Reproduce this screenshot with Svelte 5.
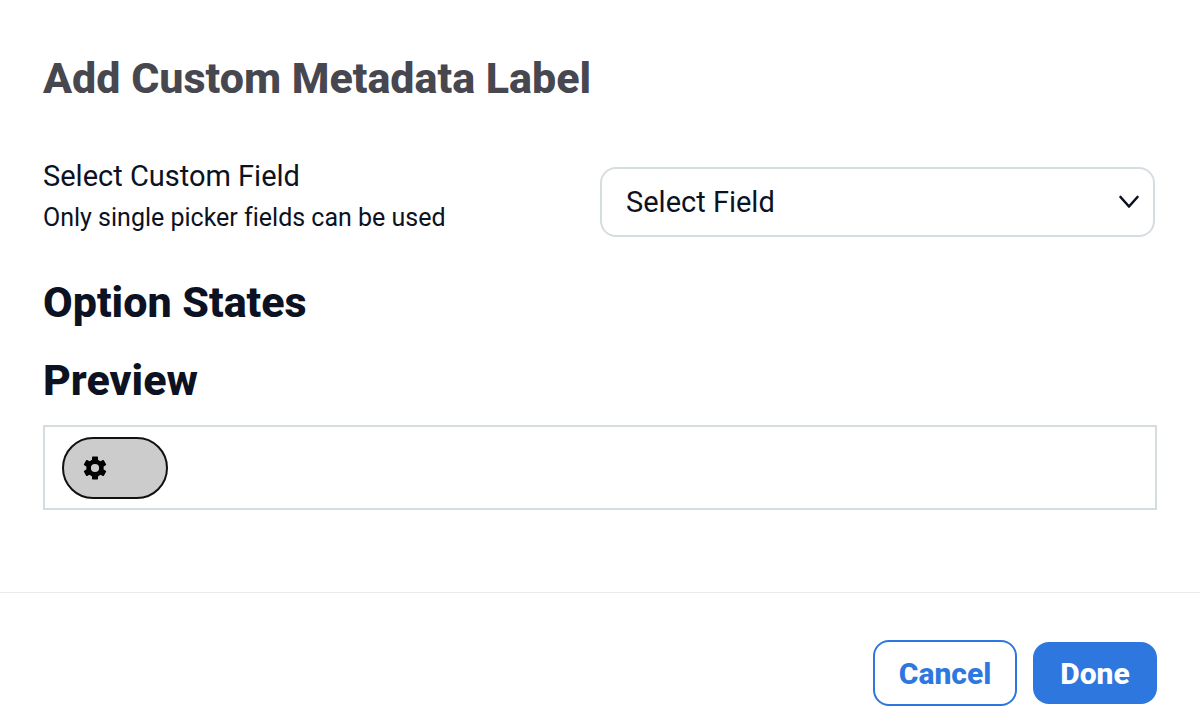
<script>
  let field = $state('');
</script>

<form class="dialog" aria-labelledby="title" onsubmit={(e) => e.preventDefault()}>
  <div class="content">
    <h1 id="title">Add Custom Metadata Label</h1>
    <div class="row">
      <div class="caption">
        <label for="field">Select Custom Field</label>
        <p id="hint">Only single picker fields can be used</p>
      </div>
      <div class="picker">
        <select id="field" aria-describedby="hint" bind:value={field}>
          <option value="">Select Field</option>
        </select>
        <svg class="chevron" viewBox="0 0 22 16" aria-hidden="true"><path d="M2.5 3 11 12.5 19.5 3" /></svg>
      </div>
    </div>
    <h2>Option States</h2>
    <h2>Preview</h2>
    <div class="preview">
      <span class="pill">
        <svg viewBox="-14 -14 28 28" aria-hidden="true">
          {#each [0, 60, 120] as angle}
            <rect x="-3" y="-11.5" width="6" height="7" rx="0.8" transform="rotate({angle})" />
            <rect x="-3" y="4.5" width="6" height="7" rx="0.8" transform="rotate({angle})" />
          {/each}
          <circle r="6.4" />
        </svg>
      </span>
    </div>
  </div>
  <footer>
    <button type="button" class="cancel">Cancel</button>
    <button type="submit" class="done">Done</button>
  </footer>
</form>

<style>
  :global(body) { margin: 0; background: #fff; }
  .dialog { font-family: "Roboto", sans-serif; color: #0c1222; font-variant-ligatures: none; }
  .content { padding: 52px 43px 82px; }
  h1, h2, p { margin: 0; }
  h1, h2 { font-size: 43px; line-height: 52px; font-weight: 800; }
  h1 { color: #47474f; }
  .row { display: grid; grid-template-columns: 1fr 1fr; margin-top: 50px; align-items: start; }
  label { display: block; font-size: 29px; line-height: 44px; }
  p { font-size: 25px; line-height: 39px; }
  .picker { position: relative; margin: 13px 2px 13px 0; }
  select { display: block; appearance: none; width: 100%; height: 70px; box-sizing: border-box; padding: 0 24px; border: 2px solid #d6dde1; border-radius: 16px; background: #fff; font: inherit; font-variant-ligatures: none; font-size: 29px; color: inherit; }
  .chevron { position: absolute; right: 15px; top: 27px; width: 22px; height: 16px; fill: none; stroke: #0c1222; stroke-width: 2.6; stroke-linecap: round; stroke-linejoin: round; pointer-events: none; }
  h2 { margin-top: 26px; }
  .preview { margin-top: 19px; padding: 10px 17px 9px; border: 2px solid #d6dde1; display: flex; }
  .pill { display: flex; align-items: center; box-sizing: border-box; width: 106px; height: 62px; padding-left: 17px; border: 2px solid #111; border-radius: 31px; background: #ccc; }
  .pill svg { width: 28px; height: 28px; }
  .pill circle { fill: #ccc; stroke: #000; stroke-width: 4.6; }
  footer { display: flex; justify-content: flex-end; align-items: center; gap: 16px; padding: 47px 43px 20px; border-top: 1px solid #ebebed; }
  button { box-sizing: border-box; padding: 0; font: inherit; font-size: 30px; font-weight: 800; border-radius: 16px; }
  .cancel { width: 144px; height: 66px; border: 2px solid #2d77de; color: #2d77de; background: #fff; }
  .done { width: 124px; height: 62px; border: 0; color: #fff; background: #2d77de; }
</style>
